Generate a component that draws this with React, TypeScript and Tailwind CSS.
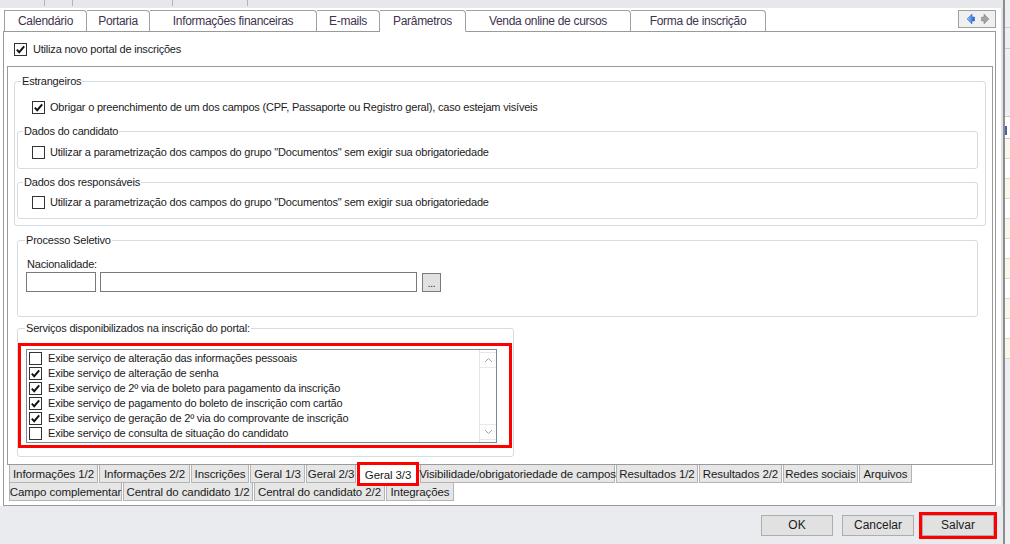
import React from "react";

type Tab = { label: string; w: string; active?: boolean };

const topTabs: Tab[] = [
  { label: "Calendário", w: "w-[83px] border-l" },
  { label: "Portaria", w: "w-[63px]" },
  { label: "Informações financeiras", w: "w-[167px]" },
  { label: "E-mails", w: "w-[63px]" },
  { label: "Parâmetros", w: "w-[86px]", active: true },
  { label: "Venda online de cursos", w: "w-[165px]" },
  { label: "Forma de inscrição", w: "w-[135px]" },
];

const bottomRow1: Tab[] = [
  { label: "Informações 1/2", w: "w-[89px]" },
  { label: "Informações 2/2", w: "w-[91px]" },
  { label: "Inscrições", w: "w-[58px]" },
  { label: "Geral 1/3", w: "w-[55px]" },
  { label: "Geral 2/3", w: "w-[50px]" },
  { label: "Geral 3/3", w: "w-[62px]", active: true },
  { label: "Visibilidade/obrigatoriedade de campos", w: "w-[195px]" },
  { label: "Resultados 1/2", w: "w-[82px]" },
  { label: "Resultados 2/2", w: "w-[83px]" },
  { label: "Redes sociais", w: "w-[75px]" },
  { label: "Arquivos", w: "w-[53px]" },
];

const bottomRow2: Tab[] = [
  { label: "Campo complementar", w: "w-[113px]" },
  { label: "Central do candidato 1/2", w: "w-[130px]" },
  { label: "Central do candidato 2/2", w: "w-[131px]" },
  { label: "Integrações", w: "w-[68px]" },
];

const servicos = [
  { label: "Exibe serviço de alteração das informações pessoais", checked: false },
  { label: "Exibe serviço de alteração de senha", checked: true },
  { label: "Exibe serviço de 2º via de boleto para pagamento da inscrição", checked: true },
  { label: "Exibe serviço de pagamento do boleto de inscrição com cartão", checked: true },
  { label: "Exibe serviço de geração de 2º via do comprovante de inscrição", checked: true },
  { label: "Exibe serviço de consulta de situação do candidato", checked: false },
];

function Check({ checked }: { checked?: boolean }) {
  return (
    <span className="w-[13px] h-[13px] shrink-0 border border-[#333] bg-white flex items-center justify-center">
      {checked && (
        <svg width="11" height="11" viewBox="0 0 11 11">
          <path d="M1.8 5.6 L4.2 8.2 L9.2 2.4" fill="none" stroke="#111" strokeWidth="1.9" />
        </svg>
      )}
    </span>
  );
}

function CheckRow({ label, checked, className = "" }: { label: string; checked?: boolean; className?: string }) {
  return (
    <div className={`h-[15px] flex items-center gap-[5px] ${className}`}>
      <Check checked={checked} />
      <span className="whitespace-nowrap">{label}</span>
    </div>
  );
}

export default function App() {
  return (
    <div className="w-[1010px] h-[544px] overflow-hidden flex bg-[#e9ebee] text-[11px] leading-[13px] tracking-[-0.2px] text-[#1b1b1b] font-['Liberation_Sans',Arial,sans-serif]">
      {/* janela principal */}
      <div className="w-[1003px] h-full flex flex-col">
        {/* faixa superior (janela de trás) */}
        <div className="h-[8px] shrink-0 bg-[#e6e8ec] flex">
          <div className="w-[45px] border-r border-[#b0b3b8] h-[6px]" />
          <div className="w-[28px] border-r border-[#b0b3b8] h-[6px]" />
          <div className="w-[100px] border-r border-[#b0b3b8] h-[6px]" />
          <div className="w-[75px] border-r border-[#b0b3b8] h-[6px]" />
        </div>

        <div className="h-[498px] shrink-0 bg-white border-r-[2px] border-[#dfe1e5] pt-[2px]">
          {/* abas superiores */}
          <div className="ml-[3px] w-[993px] h-[22px] flex text-[12px] tracking-[-0.3px] text-[#3f3350]">
            <div className="w-[1px] border-b border-[#9a9a9a]" />
            {topTabs.map((t) => (
              <div
                key={t.label}
                className={`${t.w} h-full shrink-0 border-t border-r rounded-tr-[4px] border-[#a0a0a0] flex items-center justify-center whitespace-nowrap ${
                  t.active ? "border-b border-b-white" : "border-b border-b-[#9a9a9a]"
                }`}
              >
                {t.label}
              </div>
            ))}
            <div className="flex-1 border-b border-[#9a9a9a] flex justify-end items-start">
              <div className="w-[38px] h-[18px] border border-[#a0a0a0] bg-[#f0f0f0] flex items-center justify-between pl-[7px] pr-[5px]">
                <svg width="9" height="12" viewBox="0 0 9 12">
                  <defs>
                    <linearGradient id="lb" x1="0" y1="0" x2="1" y2="0">
                      <stop offset="0" stopColor="#9cc8ff" />
                      <stop offset="1" stopColor="#1d5fd6" />
                    </linearGradient>
                  </defs>
                  <path d="M1 6 L6 1 L6 4 L8.5 4 L8.5 8 L6 8 L6 11 Z" fill="url(#lb)" stroke="#2a5fc0" strokeWidth="0.5" />
                </svg>
                <svg width="9" height="12" viewBox="0 0 9 12">
                  <path d="M8 6 L3 1 L3 4 L0.5 4 L0.5 8 L3 8 L3 11 Z" fill="#a3a3a3" stroke="#808080" strokeWidth="0.5" />
                </svg>
              </div>
            </div>
          </div>

          {/* painel da aba Parâmetros */}
          <div className="ml-[3px] w-[993px] h-[474px] border-x border-b border-[#9a9a9a] flex flex-col">
            <div className="h-[34px] shrink-0 pl-[10px] flex items-center gap-[6px]">
              <Check checked />
              <span>Utiliza novo portal de inscrições</span>
            </div>

            <div className="ml-[3px] w-[986px]">
              <div className="h-[399px] border border-[#9a9a9a] flex flex-col">
                <fieldset className="mt-[8px] ml-[6px] w-[972px] h-[151px] shrink-0 border border-[#d5dce4] rounded-[3px]">
                  <legend className="ml-[6px] px-[1px]">Estrangeiros</legend>
                  <CheckRow
                    className="mt-[12px] pl-[17px]"
                    checked
                    label="Obrigar o preenchimento de um dos campos (CPF, Passaporte ou Registro geral), caso estejam visíveis"
                  />
                  <fieldset className="mt-[10px] ml-[2px] w-[961px] h-[44px] border border-[#d5dce4] rounded-[3px]">
                    <legend className="ml-[5px] px-[1px]">Dados do candidato</legend>
                    <CheckRow
                      className="mt-[7px] pl-[14px]"
                      label={'Utilizar a parametrização dos campos do grupo "Documentos" sem exigir sua obrigatoriedade'}
                    />
                  </fieldset>
                  <fieldset className="mt-[7px] ml-[2px] w-[961px] h-[43px] border border-[#d5dce4] rounded-[3px]">
                    <legend className="ml-[5px] px-[1px]">Dados dos responsáveis</legend>
                    <CheckRow
                      className="mt-[6px] pl-[14px]"
                      label={'Utilizar a parametrização dos campos do grupo "Documentos" sem exigir sua obrigatoriedade'}
                    />
                  </fieldset>
                </fieldset>

                <fieldset className="mt-[8px] ml-[9px] w-[961px] h-[83px] shrink-0 border border-[#d5dce4] rounded-[3px]">
                  <legend className="ml-[7px] px-[1px]">Processo Seletivo</legend>
                  <div className="mt-[11px] pl-[9px]">Nacionalidade:</div>
                  <div className="mt-[1px] pl-[8px] flex items-start gap-[4px]">
                    <div className="w-[70px] h-[20px] border border-[#7a7a7a] bg-white" />
                    <div className="w-[317px] h-[20px] border border-[#7a7a7a] bg-white" />
                    <div className="ml-[1px] mt-[1px] w-[19px] h-[19px] border border-[#7a7a7a] bg-[#e1e1e1] flex items-center justify-center text-[10px] leading-[10px] pt-[3px]">
                      ...
                    </div>
                  </div>
                </fieldset>

                <fieldset className="mt-[5px] ml-[9px] w-[497px] h-[135px] shrink-0 border border-[#d5dce4] rounded-[3px]">
                  <legend className="ml-[7px] px-[1px]">Serviços disponibilizados na inscrição do portal:</legend>
                  <div className="mt-[8px] w-[494px] h-[105px] border-[3px] border-[#ff0000] pt-[3px] pl-[5px]">
                    <div className="w-[471px] h-[94px] border border-[#828790] bg-white flex">
                      <div className="flex-1 pt-[1px] pl-[2px]">
                        {servicos.map((s) => (
                          <CheckRow key={s.label} label={s.label} checked={s.checked} className="gap-[6px]" />
                        ))}
                      </div>
                      <div className="w-[17px] border-l border-[#e3e3e3] flex flex-col justify-between py-[2px]">
                        <div className="h-[16px] border-y border-[#e8e8e8] flex items-center justify-center">
                          <svg width="9" height="6" viewBox="0 0 9 6">
                            <path d="M1 5 L4.5 1.5 L8 5" fill="none" stroke="#a0a0a0" strokeWidth="1" />
                          </svg>
                        </div>
                        <div className="h-[16px] border-y border-[#e8e8e8] flex items-center justify-center">
                          <svg width="9" height="6" viewBox="0 0 9 6">
                            <path d="M1 1 L4.5 4.5 L8 1" fill="none" stroke="#a0a0a0" strokeWidth="1" />
                          </svg>
                        </div>
                      </div>
                    </div>
                  </div>
                </fieldset>
              </div>

              {/* abas inferiores */}
              <div className="pl-[2px] text-[11.5px] leading-[14px] tracking-[-0.1px] text-[#1a1a1a]">
                <div className="h-[18px] flex gap-[1px]">
                  {bottomRow1.map((t) =>
                    t.active ? (
                      <div
                        key={t.label}
                        className={`${t.w} h-[24px] mt-[-3px] shrink-0 relative z-10 border-[3px] border-[#ff0000] bg-white flex items-center justify-center pt-[2px] whitespace-nowrap`}
                      >
                        {t.label}
                      </div>
                    ) : (
                      <div
                        key={t.label}
                        className={`${t.w} h-full shrink-0 bg-[#e6e6e6] border-x border-b border-[#b4b4b4] flex items-center justify-center whitespace-nowrap`}
                      >
                        {t.label}
                      </div>
                    )
                  )}
                </div>
                <div className="h-[18px] flex gap-[1px]">
                  {bottomRow2.map((t) => (
                    <div
                      key={t.label}
                      className={`${t.w} h-full shrink-0 bg-[#e6e6e6] border-x border-b border-[#b4b4b4] flex items-center justify-center whitespace-nowrap`}
                    >
                      {t.label}
                    </div>
                  ))}
                </div>
              </div>
            </div>
          </div>
        </div>

        {/* botões */}
        <div className="flex-1 flex justify-end items-start pt-[6px] pr-[6px] text-[12px] tracking-normal">
          <div className="mt-[3px] w-[72px] h-[21px] border border-[#adadad] bg-[#e1e1e1] flex items-center justify-center">
            OK
          </div>
          <div className="mt-[3px] ml-[9px] w-[72px] h-[21px] border border-[#adadad] bg-[#e1e1e1] flex items-center justify-center">
            Cancelar
          </div>
          <div className="ml-[5px] border-[3px] border-[#ff0000]">
            <div className="w-[72px] h-[21px] border border-[#adadad] bg-[#e1e1e1] flex items-center justify-center">
              Salvar
            </div>
          </div>
        </div>
      </div>

      {/* borda e janela de trás */}
      <div className="w-[2px] h-full bg-[#8d8d8d]" />
      <div className="w-[5px] h-full bg-[#eef0f3] flex flex-col">
        <div className="h-[28px] border-b border-[#c9c9c9]" />
        <div className="h-[21px] border-b border-[#c9c9c9]" />
        <div className="h-[68px] border-b border-[#c9c9c9]" />
        <div className="h-[22px] border-b border-[#c9c9c9] bg-white flex items-end">
          <div className="w-[2px] h-[9px] bg-[#5060a0] mb-[3px]" />
        </div>
        <div className="h-[20px] border-b border-[#d6d6d6] bg-[#fbf8ea]" />
        <div className="h-[20px] border-b border-[#d6d6d6] bg-white" />
        <div className="h-[20px] border-b border-[#d6d6d6] bg-[#fbf8ea]" />
        <div className="h-[20px] border-b border-[#d6d6d6] bg-white" />
        <div className="h-[20px] border-b border-[#d6d6d6] bg-[#fbf8ea]" />
        <div className="h-[20px] border-b border-[#d6d6d6] bg-white" />
        <div className="h-[20px] border-b border-[#d6d6d6] bg-[#fbf8ea]" />
        <div className="h-[20px] border-b border-[#d6d6d6] bg-white" />
        <div className="h-[20px] border-b border-[#d6d6d6] bg-[#fbf8ea]" />
        <div className="h-[20px] border-b border-[#d6d6d6] bg-white" />
        <div className="h-[20px] border-b border-[#d6d6d6] bg-[#fbf8ea]" />
      </div>
    </div>
  );
}
